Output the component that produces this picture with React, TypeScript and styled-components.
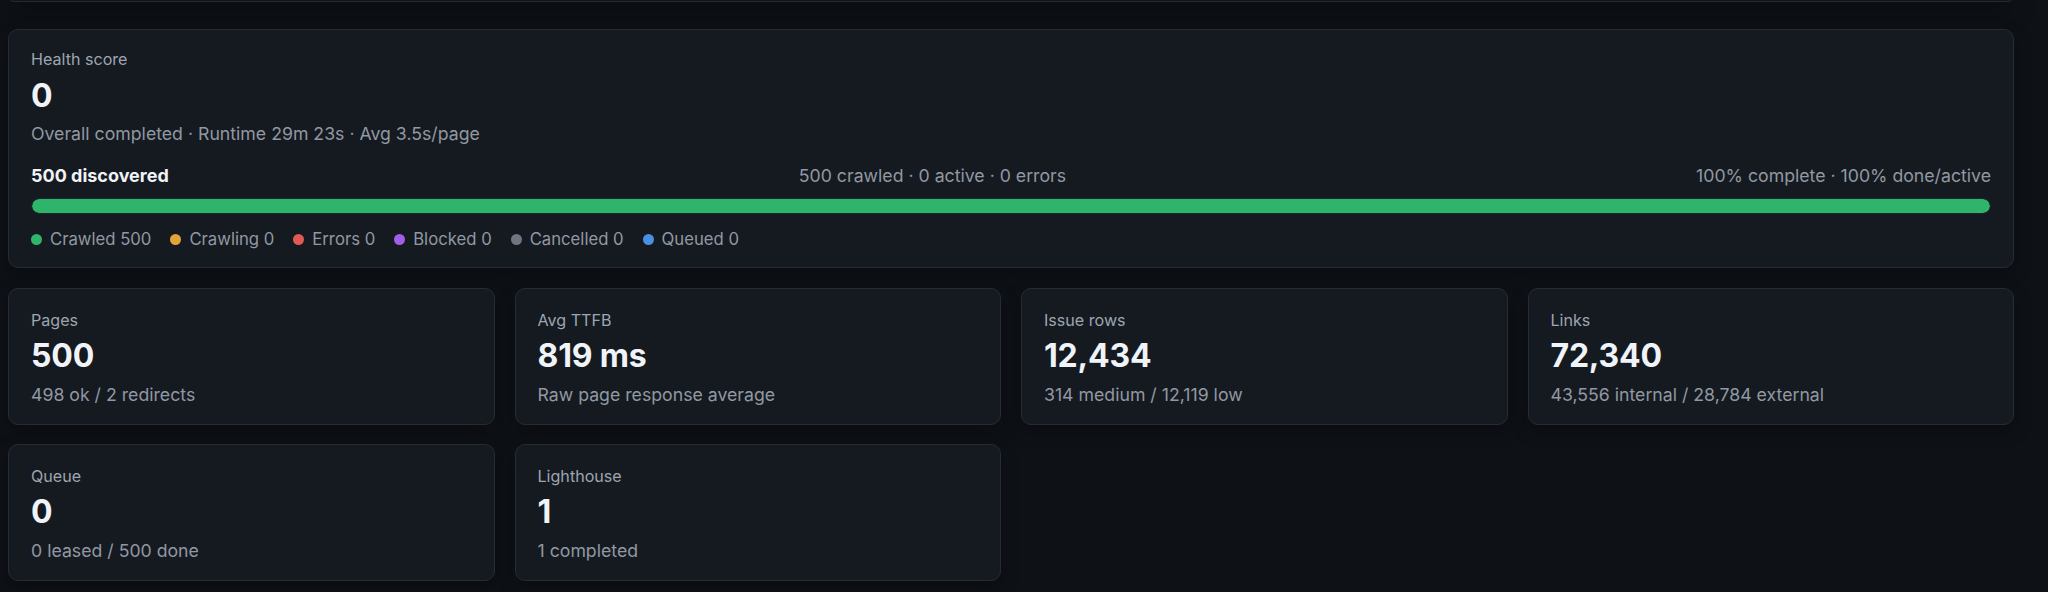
import React from "react";
import styled, { createGlobalStyle } from "styled-components";

const GlobalStyle = createGlobalStyle`
  html, body {
    margin: 0;
    padding: 0;
    background: #0e1116;
    font-family: Inter, "Noto Sans", "Liberation Sans", sans-serif;
    -webkit-font-smoothing: antialiased;
  }
  * { box-sizing: border-box; }
`;

const Page = styled.div`
  width: 2048px;
  height: 592px;
  overflow: hidden;
  padding: 0 34px 0 8px;
  background: #0e1116;
`;

const Column = styled.div`
  display: flex;
  flex-direction: column;
  gap: 20px;
`;

const PrevPanel = styled.div`
  height: 12px;
  margin-top: -10px;
  margin-bottom: 27px;
  border: 1px solid #222a36;
  border-radius: 10px;
  background: #11151b;
  box-shadow: 0 8px 22px rgba(0, 0, 0, 0.35);
`;

const Card = styled.section<{ $pad?: string }>`
  background: #151a21;
  border: 1px solid #262c36;
  border-radius: 10px;
  padding: ${(p) => p.$pad ?? "21px 22px 18px"};
  box-shadow: 0 6px 18px rgba(0, 0, 0, 0.3);
`;

const Label = styled.div`
  font-size: 16.1px;
  line-height: 20px;
  color: #9da5b0;
`;

const Value = styled.div<{ $gap: number }>`
  margin-top: ${(p) => p.$gap}px;
  font-size: 32px;
  line-height: 36px;
  font-weight: 700;
  color: #f0f3f7;
  letter-spacing: -0.2px;
`;

const Sub = styled.div<{ $gap: number }>`
  margin-top: ${(p) => p.$gap}px;
  font-size: 17.7px;
  line-height: 22px;
  color: #9198a1;
`;

const ProgressHead = styled.div`
  margin-top: 20px;
  display: flex;
  justify-content: space-between;
  align-items: baseline;
  font-size: 17.7px;
  line-height: 22px;
  color: #9198a1;
`;

const Strong = styled.span`
  font-size: 18px;
  font-weight: 700;
  color: #f0f3f7;
`;

const Track = styled.div`
  margin-top: 11px;
  height: 16px;
  border-radius: 999px;
  background: #0f1318;
  border: 1px solid #1d2530;
  overflow: hidden;
`;

const Fill = styled.div`
  height: 100%;
  border-radius: 999px;
  background: #2fb46c;
`;

const Legend = styled.div`
  margin-top: 14px;
  display: flex;
  gap: 19px;
  font-size: 16.7px;
  line-height: 22px;
  color: #9198a1;
`;

const LegendItem = styled.div`
  display: flex;
  align-items: center;
  gap: 8px;
`;

const Dot = styled.span<{ $c: string }>`
  width: 11px;
  height: 11px;
  border-radius: 50%;
  background: ${(p) => p.$c};
  flex: none;
`;

const Grid = styled.div`
  display: grid;
  grid-template-columns: repeat(4, 1fr);
  column-gap: 20px;
  row-gap: 19px;
`;

const legend = [
  { c: "#2fb46c", t: "Crawled 500" },
  { c: "#e3a23b", t: "Crawling 0" },
  { c: "#e05a55", t: "Errors 0" },
  { c: "#a35ee8", t: "Blocked 0" },
  { c: "#6e7681", t: "Cancelled 0" },
  { c: "#4a90e2", t: "Queued 0" },
];

const stats = [
  { l: "Pages", v: "500", s: "498 ok / 2 redirects" },
  { l: "Avg TTFB", v: "819 ms", s: "Raw page response average" },
  { l: "Issue rows", v: "12,434", s: "314 medium / 12,119 low" },
  { l: "Links", v: "72,340", s: "43,556 internal / 28,784 external" },
  { l: "Queue", v: "0", s: "0 leased / 500 done" },
  { l: "Lighthouse", v: "1", s: "1 completed" },
];

export default function App() {
  const pct = 100;
  return (
    <>
      <GlobalStyle />
      <Page>
        <PrevPanel />
        <Column>
          <Card $pad="19px 22px 17px">
            <Label>Health score</Label>
            <Value $gap={9}>0</Value>
            <Sub $gap={9}>Overall completed · Runtime 29m 23s · Avg 3.5s/page</Sub>
            <ProgressHead>
              <Strong>500 discovered</Strong>
              <span>500 crawled · 0 active · 0 errors</span>
              <span>100% complete · 100% done/active</span>
            </ProgressHead>
            <Track>
              <Fill style={{ width: `${pct}%` }} />
            </Track>
            <Legend>
              {legend.map((i) => (
                <LegendItem key={i.t}>
                  <Dot $c={i.c} />
                  {i.t}
                </LegendItem>
              ))}
            </Legend>
          </Card>
          <Grid>
            {stats.map((s) => (
              <Card key={s.l}>
                <Label>{s.l}</Label>
                <Value $gap={8}>{s.v}</Value>
                <Sub $gap={10}>{s.s}</Sub>
              </Card>
            ))}
          </Grid>
        </Column>
      </Page>
    </>
  );
}
